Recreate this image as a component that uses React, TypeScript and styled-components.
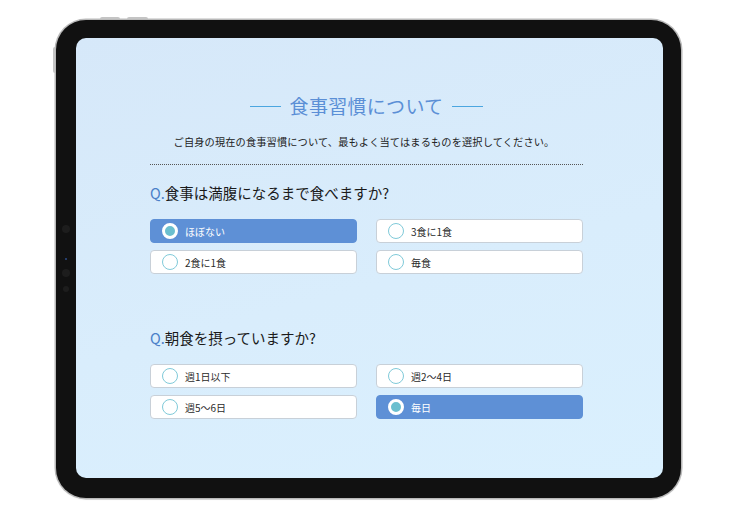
import React, { useState } from 'react';
import styled, { createGlobalStyle, css } from 'styled-components';

const GlobalStyle = createGlobalStyle`
  html, body {
    margin: 0;
    padding: 0;
    background: #fff;
  }
  body {
    font-family: "Noto Sans CJK JP", "Noto Sans", sans-serif;
  }
`;

const Stage = styled.div`
  width: 740px;
  height: 516px;
  box-sizing: border-box;
  padding: 20px 0 0 56px;
  overflow: hidden;
`;

const Device = styled.div`
  position: relative;
  width: 625px;
  height: 478px;
  box-sizing: border-box;
  padding: 18px 18px 20px 20px;
  border-radius: 30px;
  background: #111;
  box-shadow: 0 0 0 1.5px #b9b9b9, 0 1px 2px rgba(0, 0, 0, 0.2);
  display: flex;
`;

// hardware bits sitting on the bezel
const TopButtons = styled.div`
  position: absolute;
  top: -3px;
  left: 44px;
  display: flex;
  gap: 7px;
`;

const TopButton = styled.span<{ $width: number }>`
  width: ${(p) => p.$width}px;
  height: 2px;
  border-radius: 2px 2px 0 0;
  background: #c4c4c4;
`;

const SideButton = styled.span`
  position: absolute;
  left: -3px;
  top: 27px;
  width: 2px;
  height: 26px;
  border-radius: 2px 0 0 2px;
  background: #c4c4c4;
`;

const Sensors = styled.div`
  position: absolute;
  left: 6px;
  top: 205px;
  width: 8px;
  display: flex;
  flex-direction: column;
  align-items: center;
  gap: 9px;
`;

const Sensor = styled.span<{ $size: number; $blue?: boolean; $after?: number }>`
  width: ${(p) => p.$size}px;
  height: ${(p) => p.$size}px;
  border-radius: 50%;
  background: ${(p) => (p.$blue ? '#2c4d8a' : '#1d1d1d')};
  margin-bottom: ${(p) => p.$after ?? 0}px;
`;

const Screen = styled.div`
  flex: 1;
  border-radius: 10px;
  background: linear-gradient(165deg, #d6e8f9 0%, #d9edfc 55%, #daf0fe 100%);
  box-sizing: border-box;
  padding: 55px 80px 0 74px;
  overflow: hidden;
`;

const Title = styled.h1`
  margin: 0;
  display: flex;
  align-items: center;
  justify-content: center;
  gap: 9px;
  font-size: 19px;
  line-height: 26px;
  font-weight: 400;
  color: #5b8fd6;
  letter-spacing: 0.3px;
`;

const TitleLine = styled.span`
  display: block;
  width: 31px;
  height: 1px;
  background: #4ba6e0;
`;

const Lead = styled.p`
  margin: 15px 0 0;
  padding-right: 5px;
  text-align: center;
  font-size: 10.2px;
  line-height: 16px;
  letter-spacing: 0.15px;
  color: #222;
`;

const Divider = styled.hr`
  margin: 14px 0 0;
  border: 0;
  border-top: 1px dotted #555;
  height: 0;
`;

const Question = styled.h2<{ $gap: number }>`
  margin: ${(p) => p.$gap}px 0 0;
  font-size: 14.5px;
  line-height: 20px;
  font-weight: 400;
  color: #1a1a1a;
`;

const QMark = styled.span`
  color: #4a80c8;
`;

const Options = styled.div`
  margin-top: 16px;
  display: grid;
  grid-template-columns: 207px 207px;
  column-gap: 19px;
  row-gap: 7px;
`;

const Option = styled.button<{ $active: boolean }>`
  display: flex;
  align-items: center;
  gap: 7px;
  height: 24px;
  box-sizing: border-box;
  padding: 0 0 0 11px;
  border-radius: 4px;
  border: 1px solid #c8d0d8;
  background: #fff;
  color: #2a2a2a;
  font-family: inherit;
  font-size: 10px;
  text-align: left;
  cursor: pointer;
  ${(p) =>
    p.$active &&
    css`
      background: #5e90d6;
      border-color: #5e90d6;
      color: #fff;
    `}
`;

const Radio = styled.span<{ $active: boolean }>`
  flex: none;
  width: 16px;
  height: 16px;
  box-sizing: border-box;
  border-radius: 50%;
  background: #fff;
  border: 1.5px solid #80cad9;
  ${(p) =>
    p.$active &&
    css`
      background: #6bbfcf;
      border: 3px solid #fff;
    `}
`;

type Q = { text: string; options: string[]; initial: number; gap: number };

const questions: Q[] = [
  { text: '食事は満腹になるまで食べますか?', options: ['ほぼない', '3食に1食', '2食に1食', '毎食'], initial: 0, gap: 18 },
  { text: '朝食を摂っていますか?', options: ['週1日以下', '週2～4日', '週5～6日', '毎日'], initial: 3, gap: 54 },
];

const QuestionBlock: React.FC<{ q: Q }> = ({ q }) => {
  const [selected, setSelected] = useState(q.initial);
  return (
    <>
      <Question $gap={q.gap}>
        <QMark>Q.</QMark>
        {q.text}
      </Question>
      <Options>
        {q.options.map((o, i) => (
          <Option key={o} $active={selected === i} onClick={() => setSelected(i)}>
            <Radio $active={selected === i} />
            {o}
          </Option>
        ))}
      </Options>
    </>
  );
};

const App: React.FC = () => (
  <>
    <GlobalStyle />
    <Stage>
      <Device>
        <TopButtons>
          <TopButton $width={20} />
          <TopButton $width={21} />
        </TopButtons>
        <SideButton />
        <Sensors>
          <Sensor $size={8} $after={16} />
          <Sensor $size={2} $blue />
          <Sensor $size={8} />
          <Sensor $size={6} />
        </Sensors>
        <Screen>
          <Title>
            <TitleLine />
            食事習慣について
            <TitleLine />
          </Title>
          <Lead>ご自身の現在の食事習慣について、最もよく当てはまるものを選択してください。</Lead>
          <Divider />
          {questions.map((q) => (
            <QuestionBlock key={q.text} q={q} />
          ))}
        </Screen>
      </Device>
    </Stage>
  </>
);

export default App;
